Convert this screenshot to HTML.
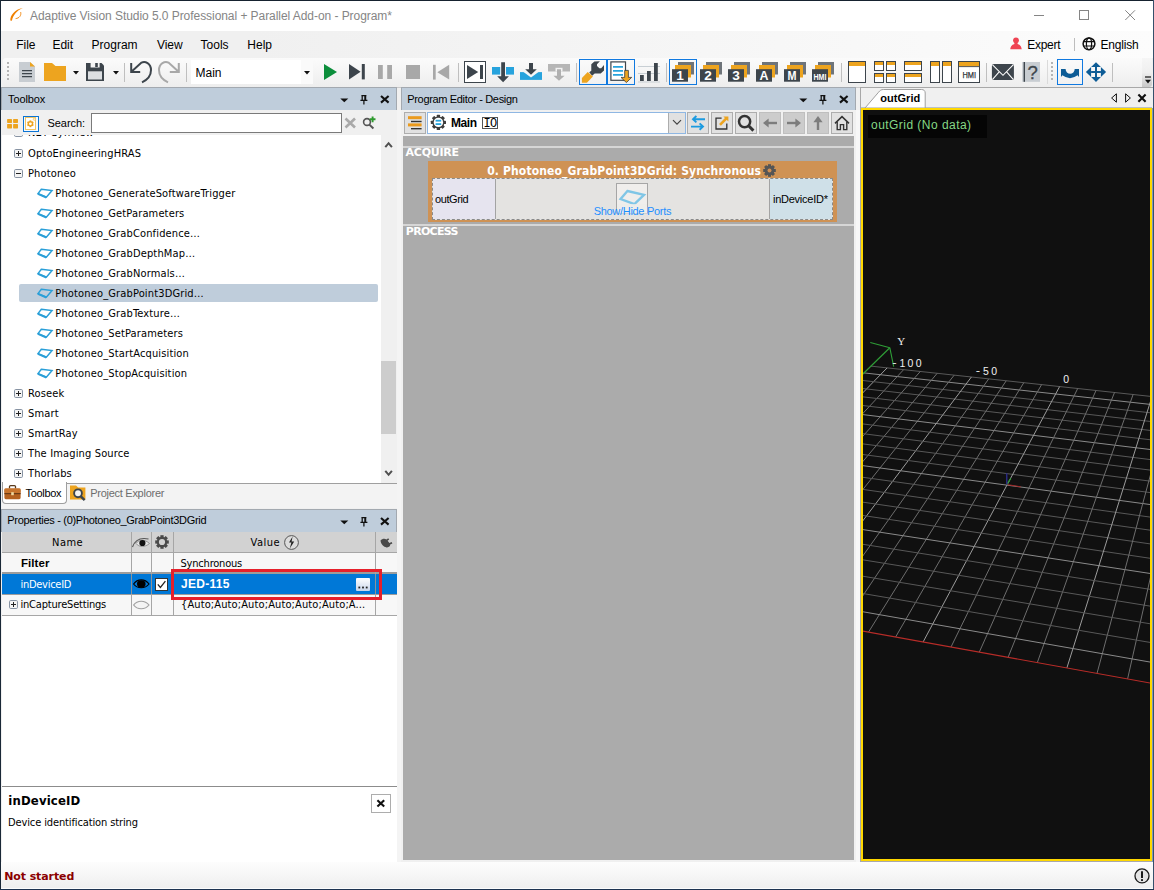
<!DOCTYPE html>
<html><head><meta charset="utf-8"><title>Adaptive Vision Studio</title>
<style>
html,body{margin:0;padding:0;}
body{width:1154px;height:890px;overflow:hidden;background:#f0f0f0;position:relative;font-family:"Liberation Sans",sans-serif;}
.a{position:absolute;box-sizing:border-box;}
.t{position:absolute;white-space:pre;line-height:1;}
svg{overflow:visible;}
</style></head><body>
<!-- window frame -->
<div class="a" style="left:0px;top:0px;width:1154px;height:890px;background:#f0f0f0;"></div>
<div class="a" style="left:0px;top:0px;width:1154px;height:1px;background:#16222f;"></div>
<div class="a" style="left:0px;top:0px;width:1px;height:890px;background:#1a2837;"></div>
<div class="a" style="left:1153px;top:0px;width:1px;height:890px;background:#35506b;"></div>
<div class="a" style="left:0px;top:889px;width:1154px;height:1px;background:#1d3350;"></div>
<div class="a" style="left:1px;top:1px;width:1152px;height:30px;background:#ffffff;"></div>
<svg class="a" style="left:8px;top:6px;" width="18" height="18" viewBox="0 0 18 18"><path d="M2.3 14.6 C2.2 9.5 6.5 3.6 14.9 2.1 C9.2 4.3 5.2 9 3.9 14.8 Z" fill="#f08000"/><path d="M12.7 6.1 C13.4 9.6 11.3 12.2 7.6 12.6" fill="none" stroke="#f08000" stroke-width="0.9"/></svg>
<span class="t" style="left:30px;top:9.84px;font-size:12px;font-family:'Liberation Sans',sans-serif;color:#858585;font-weight:normal;letter-spacing:-0.055px;">Adaptive Vision Studio 5.0 Professional + Parallel Add-on - Program*</span>
<svg class="a" style="left:1030px;top:6px;" width="110" height="18" viewBox="0 0 110 18"><path d="M4 9.5H14" stroke="#858585" stroke-width="1"/><rect x="49.5" y="4.5" width="9" height="9" fill="none" stroke="#858585" stroke-width="1"/><path d="M95.3 4.3L105 14M105 4.3L95.3 14" stroke="#858585" stroke-width="1"/></svg>
<div class="a" style="left:1px;top:31px;width:1152px;height:27px;background:linear-gradient(90deg,#f0f0f0 0%,#f0f0f0 22%,#fcfcfc 100%);"></div>
<span class="t" style="left:16.200000000000003px;top:39.24px;font-size:12px;font-family:'Liberation Sans',sans-serif;color:#000;font-weight:normal;letter-spacing:0px;">File</span>
<span class="t" style="left:52.4px;top:39.24px;font-size:12px;font-family:'Liberation Sans',sans-serif;color:#000;font-weight:normal;letter-spacing:0px;">Edit</span>
<span class="t" style="left:91.6px;top:39.24px;font-size:12px;font-family:'Liberation Sans',sans-serif;color:#000;font-weight:normal;letter-spacing:0px;">Program</span>
<span class="t" style="left:156.9px;top:39.24px;font-size:12px;font-family:'Liberation Sans',sans-serif;color:#000;font-weight:normal;letter-spacing:0px;">View</span>
<span class="t" style="left:200.6px;top:39.24px;font-size:12px;font-family:'Liberation Sans',sans-serif;color:#000;font-weight:normal;letter-spacing:0px;">Tools</span>
<span class="t" style="left:247.29999999999998px;top:39.24px;font-size:12px;font-family:'Liberation Sans',sans-serif;color:#000;font-weight:normal;letter-spacing:0px;">Help</span>
<svg class="a" style="left:1010px;top:37px;" width="12" height="13" viewBox="0 0 12 13"><circle cx="6" cy="3.3" r="2.9" fill="#ef4353"/><path d="M0.3 12.2 C0.6 8.6 3 7.2 4.4 6.9 L4.4 5.3 H7.6 V6.9 C9 7.2 11.4 8.6 11.7 12.2 Z" fill="#ef4353"/></svg>
<span class="t" style="left:1027.3px;top:39.24px;font-size:12px;font-family:'Liberation Sans',sans-serif;color:#000;font-weight:normal;letter-spacing:-0.3px;">Expert</span>
<div class="a" style="left:1074px;top:38px;width:1px;height:13px;background:#bdbdbd;"></div>
<svg class="a" style="left:1082px;top:37px;" width="14" height="14" viewBox="0 0 14 14"><circle cx="7" cy="6.8" r="5.9" fill="none" stroke="#111" stroke-width="1.5"/><ellipse cx="7" cy="6.8" rx="2.6" ry="5.9" fill="none" stroke="#111" stroke-width="1.2"/><path d="M1.2 4.6H12.8M1.2 9H12.8" stroke="#111" stroke-width="1.2"/></svg>
<span class="t" style="left:1100.5px;top:39.24px;font-size:12px;font-family:'Liberation Sans',sans-serif;color:#000;font-weight:normal;letter-spacing:-0.2px;">English</span>
<div class="a" style="left:1px;top:862px;width:1152px;height:27px;background:linear-gradient(#fdfdfd,#efefef 96%,#fcfcfc 97%);"></div>
<span class="t" style="left:4.2px;top:870.89px;font-size:11px;font-family:'DejaVu Sans',sans-serif;color:#8b0000;font-weight:bold;letter-spacing:-0.1px;">Not started</span>
<svg class="a" style="left:1134px;top:868px;" width="16" height="16" viewBox="0 0 16 16"><circle cx="8" cy="7.9" r="7" fill="#e4e4e4" stroke="#1a1a1a" stroke-width="1.3"/><path d="M8 3.2V10" stroke="#111" stroke-width="1.9"/><rect x="7" y="11.2" width="2" height="1.7" fill="#111"/></svg>
<!-- toolbar -->
<div class="a" style="left:3px;top:58px;width:1045px;height:29px;background:linear-gradient(#fbfbfb,#f3f3f3 60%,#ededed);border-radius:3px 0 0 3px;"></div>
<div class="a" style="left:1048px;top:58px;width:101px;height:29px;background:linear-gradient(#fbfbfb,#f3f3f3 60%,#ededed);"></div>
<div class="a" style="left:1px;top:87px;width:1152px;height:1px;background:#c9c9c9;"></div>
<div class="a" style="left:7px;top:62px;width:2px;height:2px;background:#b4b4b4;"></div><div class="a" style="left:7px;top:66px;width:2px;height:2px;background:#b4b4b4;"></div><div class="a" style="left:7px;top:70px;width:2px;height:2px;background:#b4b4b4;"></div><div class="a" style="left:7px;top:74px;width:2px;height:2px;background:#b4b4b4;"></div><div class="a" style="left:7px;top:78px;width:2px;height:2px;background:#b4b4b4;"></div>
<svg class="a" style="left:19px;top:62px;" width="16" height="20" viewBox="0 0 16 20"><path d="M0 0H11L16 4.6V20H0Z" fill="#c8cdd2"/><path d="M11 0L16 4.6H11Z" fill="#eda41f"/><path d="M3 8.6H13M3 11.6H13M3 14.6H13" stroke="#3d454c" stroke-width="1.25"/></svg>
<svg class="a" style="left:44px;top:63px;" width="22" height="18" viewBox="0 0 22 18"><path d="M0 0H8L11.5 3H22V18H0Z" fill="#eda41f"/></svg>
<svg class="a" style="left:73px;top:71px;" width="6" height="4" viewBox="0 0 6 4"><path d="M0 0H6L3 3.4Z" fill="#111"/></svg>
<svg class="a" style="left:86px;top:63px;" width="18" height="18" viewBox="0 0 18 18"><path d="M0 0H15.5L18 2.5V18H0Z" fill="#3d454c"/><rect x="2" y="8.3" width="14" height="8.2" fill="#dcdfe2"/><rect x="4.6" y="0" width="9" height="4.5" fill="#f4f4f4"/><rect x="9.2" y="0" width="2.6" height="4" fill="#3d454c"/></svg>
<svg class="a" style="left:113px;top:71px;" width="6" height="4" viewBox="0 0 6 4"><path d="M0 0H6L3 3.4Z" fill="#111"/></svg>
<div class="a" style="left:124px;top:63px;width:1px;height:19px;background:#bfbfbf;"></div>
<svg class="a" style="left:130px;top:61px;" width="22" height="22" viewBox="0 0 22 22"><path d="M1.2 2V11H10.2M1.4 10.8L11.5 1.6C15 -0.3 21 2.3 21 9C21 14.5 17 19 12 21.3" fill="none" stroke="#3d454c" stroke-width="2" stroke-linejoin="miter"/></svg>
<svg class="a" style="left:158px;top:61px;" width="22" height="22" viewBox="0 0 22 22"><g transform="translate(22,0) scale(-1,1)"><path d="M1.2 2V11H10.2M1.4 10.8L11.5 1.6C15 -0.3 21 2.3 21 9C21 14.5 17 19 12 21.3" fill="none" stroke="#a8a8a8" stroke-width="2" stroke-linejoin="miter"/></g></svg>
<div class="a" style="left:186px;top:63px;width:1px;height:19px;background:#bfbfbf;"></div>
<div class="a" style="left:191px;top:60px;width:122px;height:24px;background:#ffffff;"></div>
<div class="a" style="left:301px;top:60px;width:12px;height:24px;background:#fafafa;"></div>
<span class="t" style="left:195.5px;top:66.84px;font-size:12px;font-family:'Liberation Sans',sans-serif;color:#000;font-weight:normal;letter-spacing:0px;">Main</span>
<svg class="a" style="left:303.5px;top:70.5px;" width="6" height="4" viewBox="0 0 6 4"><path d="M0 0H6L3 3.6Z" fill="#111"/></svg>
<svg class="a" style="left:323px;top:63px;" width="15" height="18" viewBox="0 0 15 18"><path d="M1 1L14 9L1 17Z" fill="#0b8e3b"/></svg>
<svg class="a" style="left:348px;top:63px;" width="18" height="18" viewBox="0 0 18 18"><path d="M1 1L12.6 8.7L1 16.4Z" fill="#3d454c"/><rect x="13.8" y="1" width="3" height="15.4" fill="#3d454c"/></svg>
<svg class="a" style="left:378px;top:65px;" width="14" height="14" viewBox="0 0 14 14"><rect x="0" y="0" width="4.8" height="14" fill="#a8a8a8"/><rect x="9.2" y="0" width="4.8" height="14" fill="#a8a8a8"/></svg>
<div class="a" style="left:406px;top:65px;width:14px;height:14px;background:#a8a8a8;"></div>
<svg class="a" style="left:432px;top:64px;" width="18" height="16" viewBox="0 0 18 16"><rect x="1" y="0.8" width="2.7" height="14.8" fill="#a8a8a8"/><path d="M17.2 0.8V15.6L5.3 8.2Z" fill="#a8a8a8"/></svg>
<div class="a" style="left:458px;top:63px;width:1px;height:19px;background:#bfbfbf;"></div>
<svg class="a" style="left:464px;top:61px;" width="22" height="22" viewBox="0 0 22 22"><rect x="0.5" y="0.5" width="21" height="21" fill="#fff" stroke="#3d454c" stroke-width="1"/><path d="M3 4L14.2 11L3 18Z" fill="#3d454c"/><rect x="16" y="4" width="3" height="14" fill="#3d454c"/></svg>
<svg class="a" style="left:492px;top:61px;" width="22" height="22" viewBox="0 0 22 22"><rect x="0" y="6" width="22" height="7.6" fill="#27a3dd"/><rect x="8.2" y="5" width="5.8" height="9.6" fill="#f6f6f6"/><path d="M9.2 1.2H13V15.2H16.9L11.1 21.2L5.2 15.2H9.2Z" fill="#3d454c"/></svg>
<svg class="a" style="left:520px;top:61px;" width="22" height="22" viewBox="0 0 22 22"><path d="M0 11.1H22V18.9H0Z" fill="#27a3dd"/><path d="M3.5 11.1H18.5L11 16.5Z" fill="#f6f6f6"/><path d="M9 2H13V8.3H16.8L11 13.8L5.2 8.3H9Z" fill="#3d454c"/></svg>
<svg class="a" style="left:548px;top:61px;" width="22" height="22" viewBox="0 0 22 22"><path d="M0 3H22V10.5H0Z" fill="#b6b6b6"/><path d="M7.5 6.8H14.5V10.5H7.5Z" fill="#f2f2f2"/><path d="M9 8.3H13V14.7H16.6L11 19.8L5.4 14.7H9Z" fill="#b0b0b0"/></svg>
<div class="a" style="left:576px;top:63px;width:1px;height:19px;background:#bfbfbf;"></div>
<div class="a" style="left:579px;top:59px;width:28px;height:26px;background:linear-gradient(#fafafa,#f1f1f1);border:1px solid #1079e0;"></div>
<div class="a" style="left:607px;top:59px;width:28px;height:26px;background:linear-gradient(#fafafa,#f1f1f1);border:1px solid #1079e0;"></div>
<svg class="a" style="left:581px;top:60px;" width="24" height="24" viewBox="0 0 24 24"><path d="M8.2 12.3 L10.3 10.8 L10.3 4.3 L13.4 1.4 L18.9 1.2 L16.0 4.3 L16.0 6.1 L18.4 8.2 L20.2 8.2 L23.0 5.1 L23.0 10.5 L19.7 13.6 L13.7 13.6 L11.1 15.7Z" fill="#3d454c"/><path d="M0.9 18.1 L6.7 12.1 L11.9 16.5 L5.9 22.7 L0.9 22.7Z" fill="#eda41f"/></svg>
<svg class="a" style="left:609px;top:60px;" width="24" height="24" viewBox="0 0 24 24"><rect x="1.9" y="1.9" width="14.6" height="18.4" fill="#fff" stroke="#3d454c" stroke-width="1.2"/><path d="M4 6.9H14M4 10.9H14M4 14.9H14" stroke="#27a3dd" stroke-width="1.8"/><path d="M15.7 10.4H19.4V17.4H22.7L17.4 22.6L12 17.4H15.7Z" fill="#eda41f" stroke="#3a3a3a" stroke-width="0.8" stroke-linejoin="miter"/></svg>
<svg class="a" style="left:638px;top:61px;" width="22" height="22" viewBox="0 0 22 22"><path d="M0 5.5H22M0 12.5H22M0 21H22" stroke="#c8cfd4" stroke-width="1"/><rect x="2" y="14" width="3.8" height="6" fill="#3d454c"/><rect x="9" y="10" width="3.8" height="10" fill="#3d454c"/><rect x="16" y="2" width="3.8" height="18" fill="#3d454c"/></svg>
<div class="a" style="left:666px;top:63px;width:1px;height:19px;background:#bfbfbf;"></div>
<div class="a" style="left:669px;top:59px;width:28px;height:26px;background:linear-gradient(#fafafa,#f1f1f1);border:1px solid #1079e0;"></div>
<svg class="a" style="left:672px;top:62px;" width="22" height="20" viewBox="0 0 22 20"><rect x="6" y="0" width="16" height="12.5" fill="#6e747a"/><rect x="3" y="3" width="16" height="12.5" fill="#eda41f"/><rect x="0" y="7.2" width="16" height="12.5" fill="#3d454c"/><text x="8" y="18" text-anchor="middle" font-family="Liberation Sans,sans-serif" font-weight="bold" font-size="12.5" fill="#fff" textLength="7.6" lengthAdjust="spacingAndGlyphs">1</text></svg>
<svg class="a" style="left:700px;top:62px;" width="22" height="20" viewBox="0 0 22 20"><rect x="6" y="0" width="16" height="12.5" fill="#6e747a"/><rect x="3" y="3" width="16" height="12.5" fill="#eda41f"/><rect x="0" y="7.2" width="16" height="12.5" fill="#3d454c"/><text x="8" y="18" text-anchor="middle" font-family="Liberation Sans,sans-serif" font-weight="bold" font-size="12.5" fill="#fff" textLength="7.6" lengthAdjust="spacingAndGlyphs">2</text></svg>
<svg class="a" style="left:728px;top:62px;" width="22" height="20" viewBox="0 0 22 20"><rect x="6" y="0" width="16" height="12.5" fill="#6e747a"/><rect x="3" y="3" width="16" height="12.5" fill="#eda41f"/><rect x="0" y="7.2" width="16" height="12.5" fill="#3d454c"/><text x="8" y="18" text-anchor="middle" font-family="Liberation Sans,sans-serif" font-weight="bold" font-size="12.5" fill="#fff" textLength="7.6" lengthAdjust="spacingAndGlyphs">3</text></svg>
<svg class="a" style="left:756px;top:62px;" width="22" height="20" viewBox="0 0 22 20"><rect x="6" y="0" width="16" height="12.5" fill="#6e747a"/><rect x="3" y="3" width="16" height="12.5" fill="#eda41f"/><rect x="0" y="7.2" width="16" height="12.5" fill="#3d454c"/><text x="8" y="18" text-anchor="middle" font-family="Liberation Sans,sans-serif" font-weight="bold" font-size="12.5" fill="#fff" textLength="9" lengthAdjust="spacingAndGlyphs">A</text></svg>
<svg class="a" style="left:784px;top:62px;" width="22" height="20" viewBox="0 0 22 20"><rect x="6" y="0" width="16" height="12.5" fill="#6e747a"/><rect x="3" y="3" width="16" height="12.5" fill="#eda41f"/><rect x="0" y="7.2" width="16" height="12.5" fill="#3d454c"/><text x="8" y="18" text-anchor="middle" font-family="Liberation Sans,sans-serif" font-weight="bold" font-size="12.5" fill="#fff" textLength="9" lengthAdjust="spacingAndGlyphs">M</text></svg>
<svg class="a" style="left:812px;top:62px;" width="22" height="20" viewBox="0 0 22 20"><rect x="6" y="0" width="16" height="12.5" fill="#6e747a"/><rect x="3" y="3" width="16" height="12.5" fill="#eda41f"/><rect x="0" y="7.2" width="16" height="12.5" fill="#3d454c"/><text x="8" y="18" text-anchor="middle" font-family="Liberation Sans,sans-serif" font-weight="bold" font-size="8.6" fill="#fff" textLength="13" lengthAdjust="spacingAndGlyphs">HMI</text></svg>
<div class="a" style="left:841px;top:63px;width:1px;height:19px;background:#bfbfbf;"></div>
<svg class="a" style="left:848px;top:61px;" width="22" height="22" viewBox="0 0 22 22"><rect x="0.5" y="0.5" width="17" height="21" fill="#fff" stroke="#3d454c" stroke-width="1"/><rect x="1" y="1" width="16" height="4" fill="#eda41f"/></svg>
<svg class="a" style="left:874px;top:61px;" width="22" height="22" viewBox="0 0 22 22"><rect x="0.5" y="0.5" width="9" height="9" fill="#fff" stroke="#3d454c" stroke-width="1"/><rect x="1" y="1" width="8" height="3" fill="#eda41f"/><rect x="0.5" y="12.5" width="9" height="9" fill="#fff" stroke="#3d454c" stroke-width="1"/><rect x="1" y="13" width="8" height="3" fill="#eda41f"/><rect x="12.5" y="0.5" width="9" height="9" fill="#fff" stroke="#3d454c" stroke-width="1"/><rect x="13" y="1" width="8" height="3" fill="#eda41f"/><rect x="12.5" y="12.5" width="9" height="9" fill="#fff" stroke="#3d454c" stroke-width="1"/><rect x="13" y="13" width="8" height="3" fill="#eda41f"/></svg>
<svg class="a" style="left:902px;top:61px;" width="22" height="22" viewBox="0 0 22 22"><rect x="2.5" y="0.5" width="17" height="9" fill="#fff" stroke="#3d454c" stroke-width="1"/><rect x="3" y="1" width="16" height="3" fill="#eda41f"/><rect x="2.5" y="12.5" width="17" height="9" fill="#fff" stroke="#3d454c" stroke-width="1"/><rect x="3" y="13" width="16" height="3" fill="#eda41f"/></svg>
<svg class="a" style="left:930px;top:61px;" width="22" height="22" viewBox="0 0 22 22"><rect x="0.5" y="0.5" width="9" height="21" fill="#fff" stroke="#3d454c" stroke-width="1"/><rect x="1" y="1" width="8" height="4" fill="#eda41f"/><rect x="12.5" y="0.5" width="9" height="21" fill="#fff" stroke="#3d454c" stroke-width="1"/><rect x="13" y="1" width="8" height="4" fill="#eda41f"/></svg>
<svg class="a" style="left:958px;top:61px;" width="22" height="22" viewBox="0 0 22 22"><rect x="0.5" y="0.5" width="21" height="21" fill="#fff" stroke="#3d454c" stroke-width="1"/><rect x="1" y="1" width="20" height="4.4" fill="#eda41f"/><rect x="1" y="5.2" width="20" height="0.9" fill="#3d454c"/><text x="11.2" y="17" text-anchor="middle" font-family="Liberation Sans,sans-serif" font-size="9.6" fill="#2a2f34" stroke="#2a2f34" stroke-width="0.25" textLength="13.6" lengthAdjust="spacingAndGlyphs">HMI</text></svg>
<div class="a" style="left:986px;top:63px;width:1px;height:19px;background:#bfbfbf;"></div>
<svg class="a" style="left:991px;top:64px;" width="24" height="17" viewBox="0 0 24 17"><rect x="0.9" y="0.1" width="22" height="15.9" rx="2" fill="#3d454c"/><path d="M1.6 0.8L12 11.3L22.2 0.8M1.6 15.4L8.4 7.6M22.2 15.4L15.4 7.6" fill="none" stroke="#fff" stroke-width="1.05"/></svg>
<svg class="a" style="left:1022px;top:62px;" width="19" height="20" viewBox="0 0 19 20"><rect x="0.2" y="0" width="17.8" height="19.8" fill="#c8cdd2"/><rect x="1.6" y="0" width="1.4" height="19.8" fill="#3d454c"/><text x="10.7" y="17" text-anchor="middle" font-family="Liberation Sans,sans-serif" font-size="18.5" fill="#3d454c" stroke="#3d454c" stroke-width="0.3">?</text></svg>
<div class="a" style="left:1047px;top:60px;width:1px;height:24px;background:#dadada;"></div>
<div class="a" style="left:1051px;top:62px;width:2px;height:2px;background:#b4b4b4;"></div><div class="a" style="left:1051px;top:66px;width:2px;height:2px;background:#b4b4b4;"></div><div class="a" style="left:1051px;top:70px;width:2px;height:2px;background:#b4b4b4;"></div><div class="a" style="left:1051px;top:74px;width:2px;height:2px;background:#b4b4b4;"></div><div class="a" style="left:1051px;top:78px;width:2px;height:2px;background:#b4b4b4;"></div>
<div class="a" style="left:1057px;top:59px;width:26px;height:26px;background:linear-gradient(#fafafa,#f1f1f1);border:1px solid #1079e0;"></div>
<svg class="a" style="left:1060px;top:67px;" width="20" height="12" viewBox="0 0 20 12"><path d="M1 2.1H5.6A4.5 4.7 0 0 0 14.7 2.1H19V9.9L17.6 8.3Q10 14 2.4 8.3L1 9.9Z" fill="#0d5c96"/></svg>
<svg class="a" style="left:1086px;top:61px;" width="20" height="21" viewBox="0 0 20 21"><path d="M10 1.2L14.9 6H5.1Z M10 20.9L14.9 16H5.1Z M-0.1 11L5.1 6V16Z M20.1 11L14.9 6V16Z" fill="#0d5c96"/><rect x="9" y="6" width="2" height="10" fill="#0d5c96"/><rect x="5.1" y="10" width="9.8" height="2" fill="#0d5c96"/></svg>
<div class="a" style="left:1112px;top:63px;width:1px;height:19px;background:#bfbfbf;"></div>
<div class="a" style="left:1142px;top:58px;width:10px;height:29px;background:linear-gradient(#f6f6f6 0%,#efefef 50%,#c8c8c8 100%);border-radius:0 0 3px 0;"></div>
<svg class="a" style="left:1144px;top:76px;" width="8" height="9" viewBox="0 0 8 9"><path d="M1 1H7" stroke="#111" stroke-width="1.2"/><path d="M1 3.8H7L4 7.4Z" fill="#111"/></svg>
<!-- toolbox -->
<div class="a" style="left:1px;top:87px;width:396px;height:23px;background:#bfcddb;border:1px solid #a3a9b0;border-bottom:none;"></div>
<span class="t" style="left:8px;top:93.69px;font-size:11px;font-family:'Liberation Sans',sans-serif;color:#000;font-weight:normal;letter-spacing:-0.1px;">Toolbox</span>
<svg class="a" style="left:340px;top:98px;" width="9" height="5" viewBox="0 0 9 5"><path d="M0.3 0.4H8.3L4.3 4.2Z" fill="#111"/></svg><svg class="a" style="left:360px;top:95px;" width="8" height="10" viewBox="0 0 8 10"><path d="M1.4 0.6H6.4M2.2 0.6V5.2M5.6 0.6V5.2M4.9 0.6V5.2M0.4 5.4H7.4M3.9 5.4V9.4" stroke="#111" stroke-width="1.25" fill="none"/></svg><svg class="a" style="left:380px;top:95px;" width="10" height="9" viewBox="0 0 10 9"><path d="M1 1L8.6 7.6M8.6 1L1 7.6" stroke="#111" stroke-width="2.1"/></svg>
<svg class="a" style="left:7px;top:119px;" width="11" height="10" viewBox="0 0 11 10"><rect x="0.1" y="0.1" width="4.9" height="3.8" rx="0.6" fill="#eda41f"/><rect x="0.1" y="5.1" width="4.9" height="4.3" rx="0.6" fill="#eda41f"/><rect x="6.1" y="0.1" width="4.9" height="3.8" rx="0.6" fill="#eda41f"/><rect x="6.1" y="5.1" width="4.9" height="4.3" rx="0.6" fill="#eda41f"/></svg>
<div class="a" style="left:23px;top:116px;width:16px;height:16px;background:#f4faff;border:1px solid #0c74d4;"></div>
<svg class="a" style="left:25px;top:117px;" width="11" height="13" viewBox="0 0 11 13"><rect x="0.5" y="0.5" width="10" height="12" fill="#fff" stroke="#f1c566" stroke-width="1"/><g transform="translate(5.4,6.8)"><rect x="-0.9" y="-3.4" width="1.8" height="6.8" transform="rotate(0)" fill="#eda41f"/><rect x="-0.9" y="-3.4" width="1.8" height="6.8" transform="rotate(60)" fill="#eda41f"/><rect x="-0.9" y="-3.4" width="1.8" height="6.8" transform="rotate(120)" fill="#eda41f"/><circle r="2.7" fill="#eda41f"/><circle r="1.4" fill="#fff"/></g><circle cx="9.3" cy="2.2" r="1.1" fill="#fff" stroke="#f1c566" stroke-width="0.8"/></svg>
<span class="t" style="left:47.5px;top:117.69px;font-size:11px;font-family:'Liberation Sans',sans-serif;color:#000;font-weight:normal;letter-spacing:-0.05px;">Search:</span>
<div class="a" style="left:91px;top:113px;width:251px;height:20px;background:#fff;border:1px solid #7a7a7a;"></div>
<svg class="a" style="left:344px;top:117px;" width="13" height="12" viewBox="0 0 13 12"><path d="M1.5 1.5L11 10.5M11 1.5L1.5 10.5" stroke="#a9a9a9" stroke-width="2.6"/></svg>
<svg class="a" style="left:362px;top:116px;" width="15" height="13" viewBox="0 0 15 13"><circle cx="5" cy="6" r="3.4" fill="none" stroke="#555" stroke-width="1.6"/><path d="M7.4 8.6L11.4 12.4" stroke="#555" stroke-width="2"/><path d="M10.6 0.4V6.2M7.7 3.3H13.5" stroke="#2e9a2e" stroke-width="1.9"/></svg>
<div class="a" style="left:2px;top:135px;width:379px;height:348px;background:#fff;"></div>
<div class="a" style="left:381px;top:135px;width:16px;height:348px;background:#f0f0f0;"></div>
<div class="a" style="left:381px;top:361px;width:15px;height:73px;background:#cdcdcd;"></div>
<svg class="a" style="left:384px;top:141px;" width="10" height="8" viewBox="0 0 10 8"><path d="M1.3 6.2L4.6 2.2L7.9 6.2" fill="none" stroke="#505050" stroke-width="2"/></svg>
<svg class="a" style="left:384px;top:469px;" width="10" height="8" viewBox="0 0 10 8"><path d="M1.3 1.8L4.6 5.8L7.9 1.8" fill="none" stroke="#505050" stroke-width="2"/></svg>
<div class="a" style="left:2px;top:135px;width:379px;height:4px;overflow:hidden;"><svg class="a" style="left:12px;top:-7px;" width="9" height="9" viewBox="0 0 9 9"><rect x="0.5" y="0.5" width="8" height="8" fill="#f4f4f4" stroke="#8793a3" stroke-width="1" rx="1.2"/><path d="M2 4.5H7" stroke="#222" stroke-width="1"/></svg><span class="t" style="left:26px;top:-7.81px;font-size:11px;font-family:'DejaVu Sans Condensed','DejaVu Sans',sans-serif;color:#000;font-weight:normal;letter-spacing:0.15px;">NET Synview</span></div>
<div class="a" style="left:19px;top:284px;width:359px;height:18px;background:#bfcddb;border-radius:2px;"></div>
<svg class="a" style="left:14px;top:149px;" width="9" height="9" viewBox="0 0 9 9"><rect x="0.5" y="0.5" width="8" height="8" fill="#f4f4f4" stroke="#8793a3" stroke-width="1" rx="1.2"/><path d="M2 4.5H7" stroke="#222" stroke-width="1"/><path d="M4.5 2V7" stroke="#222" stroke-width="1"/></svg>
<span class="t" style="left:28px;top:147.69px;font-size:11px;font-family:'DejaVu Sans Condensed','DejaVu Sans',sans-serif;color:#000;font-weight:normal;letter-spacing:0.15px;">OptoEngineeringHRAS</span>
<svg class="a" style="left:14px;top:169px;" width="9" height="9" viewBox="0 0 9 9"><rect x="0.5" y="0.5" width="8" height="8" fill="#f4f4f4" stroke="#8793a3" stroke-width="1" rx="1.2"/><path d="M2 4.5H7" stroke="#222" stroke-width="1"/></svg>
<span class="t" style="left:28px;top:167.69px;font-size:11px;font-family:'DejaVu Sans Condensed','DejaVu Sans',sans-serif;color:#000;font-weight:normal;letter-spacing:0.15px;">Photoneo</span>
<svg class="a" style="left:14px;top:389px;" width="9" height="9" viewBox="0 0 9 9"><rect x="0.5" y="0.5" width="8" height="8" fill="#f4f4f4" stroke="#8793a3" stroke-width="1" rx="1.2"/><path d="M2 4.5H7" stroke="#222" stroke-width="1"/><path d="M4.5 2V7" stroke="#222" stroke-width="1"/></svg>
<span class="t" style="left:28px;top:387.69px;font-size:11px;font-family:'DejaVu Sans Condensed','DejaVu Sans',sans-serif;color:#000;font-weight:normal;letter-spacing:0.15px;">Roseek</span>
<svg class="a" style="left:14px;top:409px;" width="9" height="9" viewBox="0 0 9 9"><rect x="0.5" y="0.5" width="8" height="8" fill="#f4f4f4" stroke="#8793a3" stroke-width="1" rx="1.2"/><path d="M2 4.5H7" stroke="#222" stroke-width="1"/><path d="M4.5 2V7" stroke="#222" stroke-width="1"/></svg>
<span class="t" style="left:28px;top:407.69px;font-size:11px;font-family:'DejaVu Sans Condensed','DejaVu Sans',sans-serif;color:#000;font-weight:normal;letter-spacing:0.15px;">Smart</span>
<svg class="a" style="left:14px;top:429px;" width="9" height="9" viewBox="0 0 9 9"><rect x="0.5" y="0.5" width="8" height="8" fill="#f4f4f4" stroke="#8793a3" stroke-width="1" rx="1.2"/><path d="M2 4.5H7" stroke="#222" stroke-width="1"/><path d="M4.5 2V7" stroke="#222" stroke-width="1"/></svg>
<span class="t" style="left:28px;top:427.69px;font-size:11px;font-family:'DejaVu Sans Condensed','DejaVu Sans',sans-serif;color:#000;font-weight:normal;letter-spacing:0.15px;">SmartRay</span>
<svg class="a" style="left:14px;top:449px;" width="9" height="9" viewBox="0 0 9 9"><rect x="0.5" y="0.5" width="8" height="8" fill="#f4f4f4" stroke="#8793a3" stroke-width="1" rx="1.2"/><path d="M2 4.5H7" stroke="#222" stroke-width="1"/><path d="M4.5 2V7" stroke="#222" stroke-width="1"/></svg>
<span class="t" style="left:28px;top:447.69px;font-size:11px;font-family:'DejaVu Sans Condensed','DejaVu Sans',sans-serif;color:#000;font-weight:normal;letter-spacing:0.15px;">The Imaging Source</span>
<svg class="a" style="left:14px;top:469px;" width="9" height="9" viewBox="0 0 9 9"><rect x="0.5" y="0.5" width="8" height="8" fill="#f4f4f4" stroke="#8793a3" stroke-width="1" rx="1.2"/><path d="M2 4.5H7" stroke="#222" stroke-width="1"/><path d="M4.5 2V7" stroke="#222" stroke-width="1"/></svg>
<span class="t" style="left:28px;top:467.69px;font-size:11px;font-family:'DejaVu Sans Condensed','DejaVu Sans',sans-serif;color:#000;font-weight:normal;letter-spacing:0.15px;">Thorlabs</span>
<svg class="a" style="left:37px;top:188px;" width="16" height="11" viewBox="0 0 16 11"><path d="M4.3 1.3L15 2.5L9.4 9.2L1 5.6Z" fill="none" stroke="#2a9fd8" stroke-width="1.5" stroke-linejoin="miter"/><path d="M1 5.8L9.4 9.5" stroke="#2a9fd8" stroke-width="2"/></svg>
<span class="t" style="left:55.3px;top:187.69px;font-size:11px;font-family:'DejaVu Sans Condensed','DejaVu Sans',sans-serif;color:#000;font-weight:normal;letter-spacing:0.15px;">Photoneo_GenerateSoftwareTrigger</span>
<svg class="a" style="left:37px;top:208px;" width="16" height="11" viewBox="0 0 16 11"><path d="M4.3 1.3L15 2.5L9.4 9.2L1 5.6Z" fill="none" stroke="#2a9fd8" stroke-width="1.5" stroke-linejoin="miter"/><path d="M1 5.8L9.4 9.5" stroke="#2a9fd8" stroke-width="2"/></svg>
<span class="t" style="left:55.3px;top:207.69px;font-size:11px;font-family:'DejaVu Sans Condensed','DejaVu Sans',sans-serif;color:#000;font-weight:normal;letter-spacing:0.15px;">Photoneo_GetParameters</span>
<svg class="a" style="left:37px;top:228px;" width="16" height="11" viewBox="0 0 16 11"><path d="M4.3 1.3L15 2.5L9.4 9.2L1 5.6Z" fill="none" stroke="#2a9fd8" stroke-width="1.5" stroke-linejoin="miter"/><path d="M1 5.8L9.4 9.5" stroke="#2a9fd8" stroke-width="2"/></svg>
<span class="t" style="left:55.3px;top:227.69px;font-size:11px;font-family:'DejaVu Sans Condensed','DejaVu Sans',sans-serif;color:#000;font-weight:normal;letter-spacing:0.15px;">Photoneo_GrabConfidence…</span>
<svg class="a" style="left:37px;top:248px;" width="16" height="11" viewBox="0 0 16 11"><path d="M4.3 1.3L15 2.5L9.4 9.2L1 5.6Z" fill="none" stroke="#2a9fd8" stroke-width="1.5" stroke-linejoin="miter"/><path d="M1 5.8L9.4 9.5" stroke="#2a9fd8" stroke-width="2"/></svg>
<span class="t" style="left:55.3px;top:247.69px;font-size:11px;font-family:'DejaVu Sans Condensed','DejaVu Sans',sans-serif;color:#000;font-weight:normal;letter-spacing:0.15px;">Photoneo_GrabDepthMap…</span>
<svg class="a" style="left:37px;top:268px;" width="16" height="11" viewBox="0 0 16 11"><path d="M4.3 1.3L15 2.5L9.4 9.2L1 5.6Z" fill="none" stroke="#2a9fd8" stroke-width="1.5" stroke-linejoin="miter"/><path d="M1 5.8L9.4 9.5" stroke="#2a9fd8" stroke-width="2"/></svg>
<span class="t" style="left:55.3px;top:267.69px;font-size:11px;font-family:'DejaVu Sans Condensed','DejaVu Sans',sans-serif;color:#000;font-weight:normal;letter-spacing:0.15px;">Photoneo_GrabNormals…</span>
<svg class="a" style="left:37px;top:288px;" width="16" height="11" viewBox="0 0 16 11"><path d="M4.3 1.3L15 2.5L9.4 9.2L1 5.6Z" fill="none" stroke="#2a9fd8" stroke-width="1.5" stroke-linejoin="miter"/><path d="M1 5.8L9.4 9.5" stroke="#2a9fd8" stroke-width="2"/></svg>
<span class="t" style="left:55.3px;top:287.69px;font-size:11px;font-family:'DejaVu Sans Condensed','DejaVu Sans',sans-serif;color:#000;font-weight:normal;letter-spacing:0.15px;">Photoneo_GrabPoint3DGrid…</span>
<svg class="a" style="left:37px;top:308px;" width="16" height="11" viewBox="0 0 16 11"><path d="M4.3 1.3L15 2.5L9.4 9.2L1 5.6Z" fill="none" stroke="#2a9fd8" stroke-width="1.5" stroke-linejoin="miter"/><path d="M1 5.8L9.4 9.5" stroke="#2a9fd8" stroke-width="2"/></svg>
<span class="t" style="left:55.3px;top:307.69px;font-size:11px;font-family:'DejaVu Sans Condensed','DejaVu Sans',sans-serif;color:#000;font-weight:normal;letter-spacing:0.15px;">Photoneo_GrabTexture…</span>
<svg class="a" style="left:37px;top:328px;" width="16" height="11" viewBox="0 0 16 11"><path d="M4.3 1.3L15 2.5L9.4 9.2L1 5.6Z" fill="none" stroke="#2a9fd8" stroke-width="1.5" stroke-linejoin="miter"/><path d="M1 5.8L9.4 9.5" stroke="#2a9fd8" stroke-width="2"/></svg>
<span class="t" style="left:55.3px;top:327.69px;font-size:11px;font-family:'DejaVu Sans Condensed','DejaVu Sans',sans-serif;color:#000;font-weight:normal;letter-spacing:0.15px;">Photoneo_SetParameters</span>
<svg class="a" style="left:37px;top:348px;" width="16" height="11" viewBox="0 0 16 11"><path d="M4.3 1.3L15 2.5L9.4 9.2L1 5.6Z" fill="none" stroke="#2a9fd8" stroke-width="1.5" stroke-linejoin="miter"/><path d="M1 5.8L9.4 9.5" stroke="#2a9fd8" stroke-width="2"/></svg>
<span class="t" style="left:55.3px;top:347.69px;font-size:11px;font-family:'DejaVu Sans Condensed','DejaVu Sans',sans-serif;color:#000;font-weight:normal;letter-spacing:0.15px;">Photoneo_StartAcquisition</span>
<svg class="a" style="left:37px;top:368px;" width="16" height="11" viewBox="0 0 16 11"><path d="M4.3 1.3L15 2.5L9.4 9.2L1 5.6Z" fill="none" stroke="#2a9fd8" stroke-width="1.5" stroke-linejoin="miter"/><path d="M1 5.8L9.4 9.5" stroke="#2a9fd8" stroke-width="2"/></svg>
<span class="t" style="left:55.3px;top:367.69px;font-size:11px;font-family:'DejaVu Sans Condensed','DejaVu Sans',sans-serif;color:#000;font-weight:normal;letter-spacing:0.15px;">Photoneo_StopAcquisition</span>
<div class="a" style="left:2px;top:483px;width:395px;height:25px;background:#f3f3f3;"></div>
<div class="a" style="left:66px;top:483px;width:331px;height:1px;background:#9f9f9f;"></div>
<div class="a" style="left:2px;top:482px;width:65px;height:22px;background:#fff;border:1px solid #9f9f9f;border-top:none;border-radius:0 0 4px 4px;"></div>
<svg class="a" style="left:4px;top:485px;" width="17" height="15" viewBox="0 0 17 15"><path d="M5.5 3.6V1.6C5.5 0.9 6 0.6 6.6 0.6H10.4C11 0.6 11.5 0.9 11.5 1.6V3.6" fill="none" stroke="#5a3a1c" stroke-width="1.3"/><rect x="0.4" y="3.6" width="16.2" height="10.6" rx="1.4" fill="#b4611f"/><rect x="0.4" y="3.6" width="16.2" height="4.6" rx="1.4" fill="#c8742c"/><rect x="0.4" y="8" width="16.2" height="1.2" fill="#6b3b14"/><rect x="7.2" y="7.2" width="2.6" height="3" fill="#f0d9a0"/></svg>
<span class="t" style="left:25.5px;top:487.69px;font-size:11px;font-family:'Liberation Sans',sans-serif;color:#000;font-weight:normal;letter-spacing:-0.3px;">Toolbox</span>
<svg class="a" style="left:70px;top:485px;" width="17" height="16" viewBox="0 0 17 16"><path d="M0 0.5H6L8.2 2.6H15.4V14.6H0Z" fill="#eda41f"/><circle cx="8" cy="8.3" r="3.9" fill="#f3f3f3" stroke="#3d454c" stroke-width="1.9"/><path d="M10.8 11.3L14.6 15.2" stroke="#3d454c" stroke-width="2.4"/></svg>
<span class="t" style="left:90.2px;top:487.69px;font-size:11px;font-family:'Liberation Sans',sans-serif;color:#6d6d6d;font-weight:normal;letter-spacing:-0.27px;">Project Explorer</span>
<!-- properties -->
<div class="a" style="left:1px;top:509px;width:396px;height:23px;background:#bfcddb;border:1px solid #a3a9b0;border-bottom:none;"></div>
<span class="t" style="left:7.3px;top:515.29px;font-size:11px;font-family:'Liberation Sans',sans-serif;color:#000;font-weight:normal;letter-spacing:-0.3px;">Properties - (0)Photoneo_GrabPoint3DGrid</span>
<svg class="a" style="left:340px;top:520px;" width="9" height="5" viewBox="0 0 9 5"><path d="M0.3 0.4H8.3L4.3 4.2Z" fill="#111"/></svg><svg class="a" style="left:360px;top:517px;" width="8" height="10" viewBox="0 0 8 10"><path d="M1.4 0.6H6.4M2.2 0.6V5.2M5.6 0.6V5.2M4.9 0.6V5.2M0.4 5.4H7.4M3.9 5.4V9.4" stroke="#111" stroke-width="1.25" fill="none"/></svg><svg class="a" style="left:380px;top:517px;" width="10" height="9" viewBox="0 0 10 9"><path d="M1 1L8.6 7.6M8.6 1L1 7.6" stroke="#111" stroke-width="2.1"/></svg>
<div class="a" style="left:2px;top:532px;width:395px;height:330px;background:#fff;"></div>
<div class="a" style="left:2px;top:532px;width:395px;height:20px;background:#d2d2d2;"></div>
<div class="a" style="left:2px;top:553px;width:395px;height:62px;background:#f7f7f7;"></div>
<div class="a" style="left:2px;top:552px;width:395px;height:1px;background:#a6a6a6;"></div>
<div class="a" style="left:2px;top:572px;width:395px;height:2px;background:#9c9c9c;"></div>
<div class="a" style="left:2px;top:594px;width:395px;height:1px;background:#9c9c9c;"></div>
<div class="a" style="left:2px;top:615px;width:395px;height:1px;background:#a6a6a6;"></div>
<div class="a" style="left:131px;top:532px;width:1px;height:84px;background:#a6a6a6;"></div>
<div class="a" style="left:151px;top:532px;width:1px;height:84px;background:#a6a6a6;"></div>
<div class="a" style="left:173px;top:532px;width:1px;height:84px;background:#a6a6a6;"></div>
<div class="a" style="left:375px;top:532px;width:1px;height:84px;background:#a6a6a6;"></div>
<span class="t" style="left:52px;top:536.69px;font-size:11px;font-family:'DejaVu Sans Condensed','DejaVu Sans',sans-serif;color:#000;font-weight:normal;letter-spacing:0.5px;">Name</span>
<span class="t" style="left:250.5px;top:536.69px;font-size:11px;font-family:'DejaVu Sans Condensed','DejaVu Sans',sans-serif;color:#000;font-weight:normal;letter-spacing:0.5px;">Value</span>
<svg class="a" style="left:132px;top:536px;" width="19" height="13" viewBox="0 0 19 13"><path d="M0.5 11C3 4 8 1.2 16.5 3" fill="none" stroke="#555" stroke-width="1.1"/><path d="M4 7.5C7 3.2 13 3.2 17.5 7.5C13 11.4 7 11.4 4 7.5Z" fill="#e6e6e6" stroke="#8a8a8a" stroke-width="0.9"/><circle cx="10.4" cy="7" r="3.1" fill="#111"/></svg>
<svg class="a" style="left:155px;top:535px;" width="14" height="14" viewBox="0 0 14 14"><g transform="translate(7,7)"><rect x="-1.63" y="-6.80" width="3.26" height="13.60" transform="rotate(0)" fill="#4a4a4a"/><rect x="-1.63" y="-6.80" width="3.26" height="13.60" transform="rotate(45)" fill="#4a4a4a"/><rect x="-1.63" y="-6.80" width="3.26" height="13.60" transform="rotate(90)" fill="#4a4a4a"/><rect x="-1.63" y="-6.80" width="3.26" height="13.60" transform="rotate(135)" fill="#4a4a4a"/><circle r="5.17" fill="#4a4a4a"/><circle r="3.1" fill="#d2d2d2" class="gh"/></g></svg>
<svg class="a" style="left:284px;top:534.5px;" width="15" height="15" viewBox="0 0 15 15"><circle cx="7.5" cy="7.5" r="6.9" fill="#dcdcdc" stroke="#555" stroke-width="1"/><path d="M8.6 1.6L5 7.4H7.4L5.8 13.4L10.2 6.6H7.6Z" fill="#222"/></svg>
<svg class="a" style="left:380px;top:538px;" width="13" height="10" viewBox="0 0 13 10"><path d="M0.5 2.6C2 0.6 4.8 0.2 6.4 1.4L8.2 0.2L9.2 1.6L7.6 2.8L9.4 5L11.6 4L12.4 5.4L10.2 6.6C10.4 8 9 9.6 6.6 9.4C3.6 9.2 1 6.6 0.5 2.6Z" fill="#4a4a4a"/></svg>
<span class="t" style="left:21px;top:558.07px;font-size:11.5px;font-family:'Liberation Sans',sans-serif;color:#000;font-weight:bold;letter-spacing:0.05px;">Filter</span>
<span class="t" style="left:180.5px;top:557.69px;font-size:11px;font-family:'DejaVu Sans Condensed','DejaVu Sans',sans-serif;color:#000;font-weight:normal;letter-spacing:-0.2px;">Synchronous</span>
<div class="a" style="left:2px;top:574px;width:395px;height:20px;background:#0078d7;"></div>
<div class="a" style="left:131px;top:574px;width:1px;height:20px;background:#8d9297;"></div>
<div class="a" style="left:151px;top:574px;width:1px;height:20px;background:#8d9297;"></div>
<div class="a" style="left:173px;top:574px;width:1px;height:20px;background:#8d9297;"></div>
<div class="a" style="left:375px;top:574px;width:1px;height:20px;background:#8d9297;"></div>
<span class="t" style="left:20.5px;top:578.69px;font-size:11px;font-family:'DejaVu Sans Condensed','DejaVu Sans',sans-serif;color:#fff;font-weight:normal;letter-spacing:-0.28px;">inDeviceID</span>
<svg class="a" style="left:133px;top:579px;" width="17" height="10" viewBox="0 0 17 10"><path d="M0.6 5C4.4 -0.4 12 -0.4 16 5C12 10 4.4 10 0.6 5Z" fill="none" stroke="#000" stroke-width="1.2"/><ellipse cx="8.3" cy="5" rx="4.3" ry="3.7" fill="#000"/></svg>
<div class="a" style="left:155px;top:578px;width:13px;height:13px;background:#fff;border:1px solid #333;"></div>
<svg class="a" style="left:155px;top:578px;" width="13" height="13" viewBox="0 0 13 13"><path d="M2.8 6.4L5.4 9.4L10.4 3.2" fill="none" stroke="#222" stroke-width="1.3"/></svg>
<span class="t" style="left:181px;top:578.14px;font-size:12px;font-family:'Liberation Sans',sans-serif;color:#fff;font-weight:bold;letter-spacing:0.3px;">JED-115</span>
<div class="a" style="left:356px;top:578px;width:14px;height:13px;background:linear-gradient(#ffffff,#c9d5ea);border-radius:1px;"></div>
<svg class="a" style="left:356px;top:578px;" width="14" height="13" viewBox="0 0 14 13"><rect x="2.4" y="8.6" width="1.8" height="1.8" fill="#222"/><rect x="6.1" y="8.6" width="1.8" height="1.8" fill="#222"/><rect x="9.8" y="8.6" width="1.8" height="1.8" fill="#222"/></svg>
<svg class="a" style="left:9px;top:600px;" width="9" height="9" viewBox="0 0 9 9"><rect x="0.5" y="0.5" width="8" height="8" fill="#f4f4f4" stroke="#8793a3" stroke-width="1" rx="1.2"/><path d="M2 4.5H7" stroke="#222" stroke-width="1"/><path d="M4.5 2V7" stroke="#222" stroke-width="1"/></svg>
<span class="t" style="left:20.5px;top:599.39px;font-size:11px;font-family:'DejaVu Sans Condensed','DejaVu Sans',sans-serif;color:#000;font-weight:normal;letter-spacing:-0.2px;">inCaptureSettings</span>
<svg class="a" style="left:133px;top:600px;" width="17" height="10" viewBox="0 0 17 10"><path d="M0.6 5C4.4 0 12 0 16 5C12 10 4.4 10 0.6 5Z" fill="#f4f4f4" stroke="#a0a0a0" stroke-width="1.2"/></svg>
<span class="t" style="left:181px;top:599.39px;font-size:11px;font-family:'DejaVu Sans Condensed','DejaVu Sans',sans-serif;color:#000;font-weight:normal;letter-spacing:0.12px;">{Auto;Auto;Auto;Auto;Auto;Auto;A...</span>
<div class="a" style="left:171px;top:569px;width:211px;height:31px;border:3px solid #e6202b;"></div>
<div class="a" style="left:2px;top:786px;width:395px;height:1px;background:#8c8c8c;"></div>
<span class="t" style="left:8.3px;top:794.40px;font-size:13px;font-family:'DejaVu Sans Condensed','DejaVu Sans',sans-serif;color:#000;font-weight:bold;letter-spacing:0.15px;">inDeviceID</span>
<span class="t" style="left:8px;top:816.99px;font-size:11px;font-family:'DejaVu Sans Condensed','DejaVu Sans',sans-serif;color:#000;font-weight:normal;letter-spacing:-0.12px;">Device identification string</span>
<div class="a" style="left:371px;top:794px;width:20px;height:19px;background:#fff;border:1px solid #adadad;"></div>
<svg class="a" style="left:376px;top:799px;" width="10" height="9" viewBox="0 0 10 9"><path d="M1.4 1.2L8.2 7.6M8.2 1.2L1.4 7.6" stroke="#111" stroke-width="2.1"/></svg>
<!-- program editor -->
<div class="a" style="left:397px;top:110px;width:4px;height:752px;background:#f4f4f4;"></div>
<div class="a" style="left:856px;top:110px;width:4px;height:752px;background:#f7f7f7;"></div>
<div class="a" style="left:401px;top:87px;width:455px;height:23px;background:#bfcddb;border:1px solid #a3a9b0;border-bottom:none;"></div>
<span class="t" style="left:407.3px;top:93.69px;font-size:11px;font-family:'Liberation Sans',sans-serif;color:#000;font-weight:normal;letter-spacing:-0.34px;">Program Editor - Design</span>
<svg class="a" style="left:799px;top:98px;" width="9" height="5" viewBox="0 0 9 5"><path d="M0.3 0.4H8.3L4.3 4.2Z" fill="#111"/></svg><svg class="a" style="left:819px;top:95px;" width="8" height="10" viewBox="0 0 8 10"><path d="M1.4 0.6H6.4M2.2 0.6V5.2M5.6 0.6V5.2M4.9 0.6V5.2M0.4 5.4H7.4M3.9 5.4V9.4" stroke="#111" stroke-width="1.25" fill="none"/></svg><svg class="a" style="left:839px;top:95px;" width="10" height="9" viewBox="0 0 10 9"><path d="M1 1L8.6 7.6M8.6 1L1 7.6" stroke="#111" stroke-width="2.1"/></svg>
<div class="a" style="left:402px;top:110px;width:454px;height:26px;background:#f0f0f0;"></div>
<div class="a" style="left:404px;top:112px;width:22px;height:22px;background:#e1e1e1;border:1px solid #adadad;"></div>
<svg class="a" style="left:407px;top:115px;" width="16" height="16" viewBox="0 0 16 16"><rect x="1" y="1.2" width="13.6" height="3" fill="#eb9a1c"/><rect x="4" y="5.8" width="10.6" height="1.4" fill="#333"/><rect x="1" y="8.4" width="13.6" height="3" fill="#eb9a1c"/><rect x="4" y="13" width="10.6" height="1.4" fill="#333"/></svg>
<div class="a" style="left:427px;top:112px;width:259px;height:22px;background:#fff;border:1px solid #8fb7e3;"></div>
<div class="a" style="left:668px;top:113px;width:17px;height:20px;background:#e1e1e1;border-left:1px solid #adadad;"></div>
<svg class="a" style="left:672px;top:119px;" width="10" height="7" viewBox="0 0 10 7"><path d="M1 1.2L5 5.2L9 1.2" fill="none" stroke="#444" stroke-width="1.2"/></svg>
<svg class="a" style="left:430px;top:114px;" width="17" height="17" viewBox="0 0 17 17"><g transform="translate(8.4,8.4)"><rect x="-1.7" y="-7.6" width="3.4" height="15.2" rx="0.6" transform="rotate(0)" fill="#3d3d3d"/><rect x="-1.7" y="-7.6" width="3.4" height="15.2" rx="0.6" transform="rotate(45)" fill="#3d3d3d"/><rect x="-1.7" y="-7.6" width="3.4" height="15.2" rx="0.6" transform="rotate(90)" fill="#3d3d3d"/><rect x="-1.7" y="-7.6" width="3.4" height="15.2" rx="0.6" transform="rotate(135)" fill="#3d3d3d"/><circle r="6" fill="#3d3d3d"/><circle r="4.7" fill="#fff"/><rect x="-2.8" y="-2.6" width="5.6" height="1.8" fill="#27a3dd"/><rect x="-2.8" y="0.8" width="5.6" height="1.8" fill="#27a3dd"/></g></svg>
<span class="t" style="left:451px;top:117.14px;font-size:12px;font-family:'Liberation Sans',sans-serif;color:#000;font-weight:bold;letter-spacing:-0.45px;">Main</span>
<div class="a" style="left:482px;top:117px;width:16px;height:12px;background:#fff;border:1px solid #555;"></div>
<span class="t" style="left:483.4px;top:118.14px;font-size:12px;font-family:'Liberation Mono',monospace;color:#000;font-weight:normal;letter-spacing:-0.6px;">IO</span>
<div class="a" style="left:687px;top:112px;width:22px;height:22px;background:#e1e1e1;border:1px solid #adadad;"></div>
<div class="a" style="left:711px;top:112px;width:22px;height:22px;background:#e1e1e1;border:1px solid #adadad;"></div>
<div class="a" style="left:735px;top:112px;width:22px;height:22px;background:#e1e1e1;border:1px solid #adadad;"></div>
<div class="a" style="left:759px;top:112px;width:22px;height:22px;background:#cccccc;border:1px solid #bfbfbf;"></div>
<div class="a" style="left:783px;top:112px;width:22px;height:22px;background:#cccccc;border:1px solid #bfbfbf;"></div>
<div class="a" style="left:807px;top:112px;width:22px;height:22px;background:#cccccc;border:1px solid #bfbfbf;"></div>
<div class="a" style="left:831px;top:112px;width:22px;height:22px;background:#e1e1e1;border:1px solid #adadad;"></div>
<svg class="a" style="left:690px;top:115px;" width="16" height="16" viewBox="0 0 16 16"><path d="M15 4.2H3.4M6.4 1L3 4.2L6.4 7.4" fill="none" stroke="#1d9be0" stroke-width="1.9"/><path d="M1 11.6H12.6M9.6 8.4L13 11.6L9.6 14.8" fill="none" stroke="#1d9be0" stroke-width="1.9"/></svg>
<svg class="a" style="left:714px;top:115px;" width="16" height="16" viewBox="0 0 16 16"><path d="M7.6 3.2H2V14H12.8V8.6" fill="none" stroke="#333" stroke-width="1.3"/><path d="M6 9.8L12.6 3.2" stroke="#eda41f" stroke-width="2.6"/><path d="M9.4 1.6H14.4V6.6Z" fill="#eda41f"/></svg>
<svg class="a" style="left:737px;top:114px;" width="18" height="18" viewBox="0 0 18 18"><circle cx="7.6" cy="7.6" r="5.6" fill="none" stroke="#333" stroke-width="2.5"/><path d="M11.6 11.8L16.4 16.6" stroke="#333" stroke-width="3"/></svg>
<svg class="a" style="left:762px;top:116px;" width="16" height="14" viewBox="0 0 16 14"><path d="M15 7H4" stroke="#7d7d7d" stroke-width="2.4"/><path d="M6.6 2.4L1 7L6.6 11.6Z" fill="#7d7d7d"/></svg>
<svg class="a" style="left:786px;top:116px;" width="16" height="14" viewBox="0 0 16 14"><path d="M1 7H12" stroke="#7d7d7d" stroke-width="2.4"/><path d="M9.4 2.4L15 7L9.4 11.6Z" fill="#7d7d7d"/></svg>
<svg class="a" style="left:811px;top:115px;" width="14" height="16" viewBox="0 0 14 16"><path d="M7 15V5" stroke="#7d7d7d" stroke-width="2.4"/><path d="M2.4 7.2L7 1L11.6 7.2Z" fill="#7d7d7d"/></svg>
<svg class="a" style="left:834px;top:115px;" width="16" height="16" viewBox="0 0 16 16"><path d="M1 8.4L8 1.6L15 8.4" fill="none" stroke="#333" stroke-width="1.5"/><path d="M3.2 7V14.6H6.4V9.6H9.6V14.6H12.8V7" fill="none" stroke="#333" stroke-width="1.4"/></svg>
<div class="a" style="left:403px;top:136px;width:451px;height:724px;background:#ababab;"></div>
<div class="a" style="left:403px;top:146px;width:451px;height:2px;background:#d6d6d6;"></div>
<div class="a" style="left:403px;top:224px;width:451px;height:2px;background:#d6d6d6;"></div>
<span class="t" style="left:405.6px;top:146.99px;font-size:11px;font-family:'DejaVu Sans',sans-serif;color:#fff;font-weight:bold;letter-spacing:-0.25px;">ACQUIRE</span>
<span class="t" style="left:405.8px;top:226.29px;font-size:11px;font-family:'DejaVu Sans',sans-serif;color:#fff;font-weight:bold;letter-spacing:-0.7px;">PROCESS</span>
<div class="a" style="left:428px;top:161px;width:409px;height:61px;background:#cf9254;"></div>
<svg class="a" style="left:763px;top:164px;" width="13" height="13" viewBox="0 0 13 13"><g transform="translate(6.5,6.5)"><rect x="-1.5" y="-6.3" width="3" height="12.6" transform="rotate(0)" fill="#555"/><rect x="-1.5" y="-6.3" width="3" height="12.6" transform="rotate(45)" fill="#555"/><rect x="-1.5" y="-6.3" width="3" height="12.6" transform="rotate(90)" fill="#555"/><rect x="-1.5" y="-6.3" width="3" height="12.6" transform="rotate(135)" fill="#555"/><circle r="4.9" fill="#555"/><circle r="2" fill="#d08e52"/></g></svg>
<div class="a" style="left:432px;top:178px;width:401px;height:42px;background:#e4e3e1;border:1px dashed #8a8a8a;"></div>
<span class="t" style="left:487.2px;top:164.64px;font-size:12px;font-family:'DejaVu Sans Condensed','DejaVu Sans',sans-serif;color:#fff;font-weight:bold;letter-spacing:0.135px;">0. Photoneo_GrabPoint3DGrid: Synchronous</span>
<div class="a" style="left:433px;top:179px;width:62px;height:40px;background:#e6e4ef;"></div>
<div class="a" style="left:495px;top:179px;width:1px;height:40px;background:#a3a3a3;"></div>
<div class="a" style="left:769px;top:179px;width:1px;height:40px;background:#a3a3a3;"></div>
<div class="a" style="left:770px;top:179px;width:62px;height:40px;background:#cfe0e8;"></div>
<span class="t" style="left:435px;top:193.69px;font-size:11px;font-family:'Liberation Sans',sans-serif;color:#000;font-weight:normal;letter-spacing:-0.4px;">outGrid</span>
<span class="t" style="left:773px;top:193.69px;font-size:11px;font-family:'Liberation Sans',sans-serif;color:#000;font-weight:normal;letter-spacing:-0.25px;">inDeviceID*</span>
<div class="a" style="left:616px;top:183px;width:32px;height:31px;background:#f0eeec;border:1px solid #a6a6a6;border-bottom-color:#d4d2d0;"></div>
<svg class="a" style="left:616px;top:183px;" width="32" height="31" viewBox="0 0 32 31"><path d="M11.4 8L28 11.9L18.4 21.2L4.6 16Z" fill="none" stroke="#80c6e6" stroke-width="2.4" stroke-linejoin="miter"/></svg>
<div class="a" style="left:617px;top:204px;width:30px;height:9px;background:rgba(238,236,234,0.8);"></div>
<span class="t" style="left:593.7px;top:206.39px;font-size:11px;font-family:'Liberation Sans',sans-serif;color:#1e8fff;font-weight:normal;letter-spacing:-0.3px;">Show/Hide Ports</span>
<!-- 3d view -->
<div class="a" style="left:860px;top:87px;width:293px;height:1px;background:#a8a8a8;"></div>
<div class="a" style="left:860px;top:87px;width:1px;height:775px;background:#a8a8a8;"></div>
<div class="a" style="left:860px;top:861px;width:293px;height:1px;background:#a8a8ac;"></div>
<div class="a" style="left:1152px;top:108px;width:1px;height:754px;background:#7f9cb8;"></div>
<div class="a" style="left:861px;top:88px;width:292px;height:20px;background:#f0f0f0;"></div>
<div class="a" style="left:861px;top:107px;width:291px;height:1px;background:#b9c0c8;"></div>
<svg class="a" style="left:861px;top:88px;" width="70" height="20" viewBox="0 0 70 20"><path d="M4 20L17.6 4.2C19 2.4 20.2 1.5 22.5 1.5H60.5C62.8 1.5 64.2 2.8 64.2 5V20Z" fill="#fff" stroke="#a0a0a0" stroke-width="1"/></svg>
<span class="t" style="left:880.3px;top:93.29px;font-size:11px;font-family:'Liberation Sans',sans-serif;color:#000;font-weight:bold;letter-spacing:0.03px;">outGrid</span>
<svg class="a" style="left:1110px;top:93px;" width="40" height="11" viewBox="0 0 40 11"><path d="M6.4 0.8V9.2L1.6 5Z" fill="none" stroke="#111" stroke-width="1"/><path d="M15.6 0.8V9.2L20.4 5Z" fill="none" stroke="#111" stroke-width="1"/><path d="M28.4 1.6L35.6 8.8M35.6 1.6L28.4 8.8" stroke="#111" stroke-width="2.1"/></svg>
<div class="a" style="left:861px;top:108px;width:291px;height:753px;background:#ffd800;"></div>
<div class="a" style="left:863px;top:110px;width:287px;height:749px;background:#101010;"></div>
<svg class="a" style="left:863px;top:110px;overflow:hidden" width="287" height="749" viewBox="0 0 287 749" fill="none"><path d="M7.7 256.1L405.8 299.2" stroke="#585858" stroke-width="1.0"/><path d="M0.8 262.9L405.5 307.4" stroke="#8a8a8a" stroke-width="1.0"/><path d="M24.1 257.9L-197.9 485.4" stroke="#9c9c9c" stroke-width="1.0"/><path d="M-6.3 269.8L405.0 316.0" stroke="#585858" stroke-width="1.0"/><path d="M40.6 259.7L-173.7 489.8" stroke="#6e6e6e" stroke-width="1.0"/><path d="M-13.6 277.0L404.6 324.9" stroke="#585858" stroke-width="1.0"/><path d="M57.3 261.5L-149.2 494.2" stroke="#6e6e6e" stroke-width="1.0"/><path d="M-21.1 284.4L404.2 334.1" stroke="#585858" stroke-width="1.0"/><path d="M74.2 263.3L-124.3 498.7" stroke="#6e6e6e" stroke-width="1.0"/><path d="M-29.0 292.1L403.7 343.6" stroke="#585858" stroke-width="1.0"/><path d="M91.2 265.2L-99.1 503.3" stroke="#6e6e6e" stroke-width="1.0"/><path d="M-37.1 300.1L403.2 353.6" stroke="#8a8a8a" stroke-width="1.0"/><path d="M108.4 267.0L-73.5 507.9" stroke="#9c9c9c" stroke-width="1.0"/><path d="M-45.5 308.3L402.7 363.9" stroke="#585858" stroke-width="1.0"/><path d="M125.7 268.9L-47.6 512.6" stroke="#6e6e6e" stroke-width="1.0"/><path d="M-54.2 316.8L402.2 374.7" stroke="#585858" stroke-width="1.0"/><path d="M143.2 270.8L-21.2 517.3" stroke="#6e6e6e" stroke-width="1.0"/><path d="M-63.3 325.7L401.7 386.0" stroke="#585858" stroke-width="1.0"/><path d="M160.8 272.7L5.5 522.1" stroke="#6e6e6e" stroke-width="1.0"/><path d="M-72.6 334.9L401.1 397.7" stroke="#585858" stroke-width="1.0"/><path d="M178.6 274.6L32.6 527.0" stroke="#6e6e6e" stroke-width="1.0"/><path d="M-82.4 344.5L400.5 409.9" stroke="#8a8a8a" stroke-width="1.0"/><path d="M196.6 276.6L60.1 532.0" stroke="#9c9c9c" stroke-width="1.0"/><path d="M-92.6 354.5L399.9 422.7" stroke="#585858" stroke-width="1.0"/><path d="M214.7 278.5L88.0 537.0" stroke="#6e6e6e" stroke-width="1.0"/><path d="M-103.1 364.8L399.3 436.1" stroke="#585858" stroke-width="1.0"/><path d="M233.0 280.5L116.3 542.1" stroke="#6e6e6e" stroke-width="1.0"/><path d="M-114.1 375.6L398.6 450.1" stroke="#585858" stroke-width="1.0"/><path d="M251.5 282.5L145.1 547.3" stroke="#6e6e6e" stroke-width="1.0"/><path d="M-125.6 386.8L397.9 464.8" stroke="#585858" stroke-width="1.0"/><path d="M270.1 284.5L174.3 552.6" stroke="#6e6e6e" stroke-width="1.0"/><path d="M-137.5 398.6L397.2 480.3" stroke="#8a8a8a" stroke-width="1.0"/><path d="M289.0 286.6L203.9 557.9" stroke="#9c9c9c" stroke-width="1.0"/><path d="M-150.0 410.8L396.4 496.5" stroke="#585858" stroke-width="1.0"/><path d="M308.0 288.6L234.0 563.4" stroke="#6e6e6e" stroke-width="1.0"/><path d="M-163.0 423.6L395.6 513.6" stroke="#585858" stroke-width="1.0"/><path d="M327.2 290.7L264.6 568.9" stroke="#6e6e6e" stroke-width="1.0"/><path d="M-176.7 437.0L394.7 531.6" stroke="#585858" stroke-width="1.0"/><path d="M346.6 292.8L295.6 574.5" stroke="#6e6e6e" stroke-width="1.0"/><path d="M-191.0 451.0L393.8 550.6" stroke="#585858" stroke-width="1.0"/><path d="M366.1 294.9L327.2 580.2" stroke="#6e6e6e" stroke-width="1.0"/><path d="M-206.0 465.7L392.9 570.6" stroke="#8a8a8a" stroke-width="1.0"/><path d="M385.9 297.0L359.3 586.0" stroke="#9c9c9c" stroke-width="1.0"/><path d="M-221.7 481.1L391.8 591.9" stroke="#b82c28" stroke-width="1.1"/><path d="M405.8 299.2L391.8 591.9" stroke="#6e6e6e" stroke-width="1.0"/><path d="M-221.7 481.1L26.8 237.7" stroke="#2f9e37" stroke-width="1.2"/><path d="M26.8 237.7L7.3 232.5" stroke="#2f9e37" stroke-width="1.1"/><path d="M26.8 237.7L30.7 256.6" stroke="#2f9e37" stroke-width="1.1"/><path d="M143.8 374.5L157.7 376.8" stroke="#a02424" stroke-width="1.0"/><path d="M143.8 374.5L147.8 368.3" stroke="#2f9e37" stroke-width="1.3"/><path d="M143.8 374.5L143.7 363.3" stroke="#2a2a80" stroke-width="1.5"/></svg>
<div class="a" style="left:868px;top:115px;width:119px;height:23px;background:#050505;"></div>
<span class="t" style="left:871px;top:118.84px;font-size:12px;font-family:'Liberation Sans',sans-serif;color:#86d886;font-weight:normal;letter-spacing:0.46px;">outGrid (No data)</span>
<span class="t" style="left:897.3px;top:335.69px;font-size:11px;font-family:'Liberation Serif',serif;color:#f4f4f4;font-weight:normal;letter-spacing:0px;">Y</span>
<span class="t" style="left:891px;top:358.11px;font-size:10.5px;font-family:'Liberation Sans',sans-serif;color:#f0f0f0;font-weight:normal;letter-spacing:2.3px;"><span style="font-family:'Liberation Mono',monospace;font-size:11.5px;margin-right:1.5px;letter-spacing:0;position:relative;top:-1.4px">-</span>100</span>
<span class="t" style="left:974.6px;top:365.91px;font-size:10.5px;font-family:'Liberation Sans',sans-serif;color:#f0f0f0;font-weight:normal;letter-spacing:2.3px;"><span style="font-family:'Liberation Mono',monospace;font-size:11.5px;margin-right:1.5px;letter-spacing:0;position:relative;top:-1.4px">-</span>50</span>
<span class="t" style="left:1063.3px;top:373.71px;font-size:10.5px;font-family:'Liberation Sans',sans-serif;color:#f0f0f0;font-weight:normal;letter-spacing:2.3px;">0</span>
</body></html>
